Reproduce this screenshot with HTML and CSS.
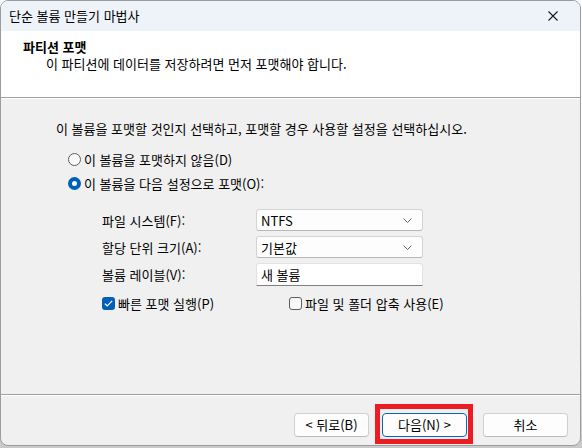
FILE: index.html
```html
<!DOCTYPE html>
<html lang="ko">
<head>
<meta charset="utf-8">
<title>단순 볼륨 만들기 마법사</title>
<link rel="stylesheet" href="styles.css">
</head>
<body>
<div class="window">
  <div class="titlebar">
    <span class="title">단순 볼륨 만들기 마법사</span>
    <svg class="close" width="10" height="10" viewBox="0 0 10 10"><path d="M0.5 0.5L9.5 9.5M9.5 0.5L0.5 9.5" stroke="#1a1a1a" stroke-width="1.1" fill="none"/></svg>
  </div>
  <div class="header">
    <div class="h-title">파티션 포맷</div>
    <div class="h-sub">이 파티션에 데이터를 저장하려면 먼저 포맷해야 합니다.</div>
  </div>
  <div class="content">
    <div class="intro">이 볼륨을 포맷할 것인지 선택하고, 포맷할 경우 사용할 설정을 선택하십시오.</div>
    <div class="radios">
      <div class="radio"><span class="rb"></span><span>이 볼륨을 포맷하지 않음(D)</span></div>
      <div class="radio"><span class="rb on"></span><span>이 볼륨을 다음 설정으로 포맷(O):</span></div>
    </div>
    <div class="grid">
      <span class="lbl">파일 시스템(F):</span>
      <div class="select"><span class="latin">NTFS</span><svg class="chev" width="9" height="5" viewBox="0 0 9 5"><path d="M0.5 0.5L4.5 4.5L8.5 0.5" stroke="#606060" stroke-width="1" fill="none"/></svg></div>
      <span class="lbl">할당 단위 크기(A):</span>
      <div class="select"><span>기본값</span><svg class="chev" width="9" height="5" viewBox="0 0 9 5"><path d="M0.5 0.5L4.5 4.5L8.5 0.5" stroke="#606060" stroke-width="1" fill="none"/></svg></div>
      <span class="lbl">볼륨 레이블(V):</span>
      <div class="textbox"><span>새 볼륨</span></div>
    </div>
    <div class="checks">
      <div class="check c1"><span class="cb on"><svg width="9" height="7" viewBox="0 0 9 7"><path d="M0.8 3.6L3.2 6L8.2 0.8" stroke="#fff" stroke-width="1.2" fill="none"/></svg></span><span>빠른 포맷 실행(P)</span></div>
      <div class="check c2"><span class="cb"></span><span>파일 및 폴더 압축 사용(E)</span></div>
    </div>
  </div>
  <div class="footer">
    <button class="btn back">&lt; 뒤로(B)</button>
    <div class="next-wrap">
      <button class="btn next">다음(N) &gt;</button>
      <span class="highlight"></span>
    </div>
    <button class="btn cancel">취소</button>
  </div>
</div>
</body>
</html>
```
FILE: styles.css
```css
html, body {
  margin: 0;
  padding: 0;
}
body {
  width: 582px;
  height: 448px;
  background: linear-gradient(#ffffff, #ffffff 60%, #c9c9c9);
  font-family: "Noto Sans CJK KR", "Noto Sans", sans-serif;
  font-size: 13px;
  color: #000;
  overflow: hidden;
}
.window {
  box-sizing: border-box;
  width: 581px;
  height: 446px;
  border: 1px solid #9c9c9c;
  border-radius: 8px;
  overflow: hidden;
  display: flex;
  flex-direction: column;
  background: #f0f0f0;
}
.titlebar {
  height: 30px;
  flex: none;
  background: #eef3f9;
  display: flex;
  align-items: center;
  padding-left: 8px;
}
.title {
  line-height: 16px;
}
.close {
  margin-left: auto;
  margin-right: 22px;
}
.header {
  flex: none;
  height: 67px;
  background: #fff;
  padding: 7px 0 0 22px;
  box-sizing: border-box;
  border-bottom: 1px solid #a0a0a0;
}
.h-title {
  font-weight: bold;
  line-height: 17px;
}
.h-sub {
  line-height: 17px;
  padding-left: 23px;
}
.content {
  flex: 1;
  border-top: 1px solid #fff;
  border-bottom: 1px solid #a0a0a0;
  padding: 22px 0 0 55px;
}
.intro {
  line-height: 16px;
}
.radios {
  margin-top: 10px;
  padding-left: 12px;
}
.radio {
  height: 24px;
  display: flex;
  align-items: center;
  gap: 3px;
}
.rb {
  box-sizing: border-box;
  width: 13px;
  height: 13px;
  border-radius: 50%;
  border: 1px solid #5c5c5c;
  background: #f8f8f8;
}
.rb.on {
  border: 4px solid #005fb8;
  background: #fff;
}
.grid {
  margin-top: 14px;
  padding-left: 46px;
  display: grid;
  grid-template-columns: 154px 167px;
  grid-auto-rows: 22px;
  row-gap: 5px;
  align-items: center;
}
.select, .textbox {
  box-sizing: border-box;
  height: 22px;
  background: #fdfdfd;
  border: 1px solid #d4d4d4;
  border-bottom-color: #b8b8b8;
  border-radius: 3px;
  display: flex;
  align-items: center;
  padding-left: 4px;
}
.textbox {
  height: 23px;
  border-radius: 3px 3px 0 0;
  border-color: #e2e2e2;
  border-bottom: 1px solid #808080;
  background: #fff;
}
.chev {
  margin-left: auto;
  margin-right: 10px;
}
.checks {
  margin-top: 12px;
  padding-left: 46px;
  display: flex;
}
.check {
  display: flex;
  align-items: center;
  gap: 3px;
  height: 13px;
}
.c1 {
  width: 187px;
}
.cb {
  box-sizing: border-box;
  width: 13px;
  height: 13px;
  border-radius: 3px;
  border: 1px solid #5c5c5c;
  background: #f8f8f8;
  display: flex;
  align-items: center;
  justify-content: center;
}
.cb.on {
  border: none;
  background: #005fb8;
}
.footer {
  flex: none;
  height: 50px;
  border-top: 1px solid #fff;
  box-sizing: border-box;
  display: flex;
  align-items: flex-start;
  padding: 17px 0 0 293px;
}
.btn {
  font-family: inherit;
  font-size: 13px;
  color: #000;
  height: 24px;
  box-sizing: border-box;
  background: #fdfdfd;
  border: 1px solid #d0d0d0;
  border-bottom-color: #bcbcbc;
  border-radius: 4px;
  padding: 0;
  line-height: 20px;
}
.back {
  width: 75px;
}
.next-wrap {
  position: relative;
  margin-left: 13px;
}
.next {
  width: 85px;
  border: 1px solid #0067c0;
}
.cancel {
  width: 85px;
  margin-left: 16px;
}
.highlight {
  position: absolute;
  left: -7px;
  top: -9px;
  right: -6px;
  bottom: -7px;
  border: 5px solid #ed1c24;
}
```
